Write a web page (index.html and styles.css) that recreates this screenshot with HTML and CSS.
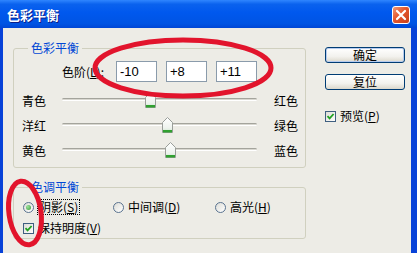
FILE: index.html
```html
<!DOCTYPE html>
<html lang="zh-CN">
<head>
    <meta charset="UTF-8">
    <title>色彩平衡</title>
    <link rel="stylesheet" href="styles.css">
</head>
<body>

<div class="window">
    <div class="titlebar">
        <span class="title">色彩平衡</span>
        <span class="close">
            <svg width="18" height="18" viewBox="0 0 18 18">
                <path d="M5 5 L13 13 M13 5 L5 13" stroke="#fff" stroke-width="2.2" stroke-linecap="round"/>
            </svg>
        </span>
    </div>

    <div class="client">
        <div class="main">
            <fieldset class="group group-color">
                <legend>色彩平衡</legend>
                <div class="levels">
                    <label class="levels-label">色阶(<u>L</u>):</label>
                    <input type="text" class="num" value="-10">
                    <input type="text" class="num" value="+8">
                    <input type="text" class="num" value="+11">
                </div>
                <div class="sliders">
                    <div class="slider-row">
                        <span class="lbl-left">青色</span>
                        <div class="track"><span class="thumb" style="left: 45%"></span></div>
                        <span class="lbl-right">红色</span>
                    </div>
                    <div class="slider-row">
                        <span class="lbl-left">洋红</span>
                        <div class="track"><span class="thumb" style="left: 54%"></span></div>
                        <span class="lbl-right">绿色</span>
                    </div>
                    <div class="slider-row">
                        <span class="lbl-left">黄色</span>
                        <div class="track"><span class="thumb" style="left: 55.5%"></span></div>
                        <span class="lbl-right">蓝色</span>
                    </div>
                </div>
            </fieldset>

            <fieldset class="group group-tone">
                <legend>色调平衡</legend>
                <div class="radios">
                    <span class="opt opt-shadow"><span class="radio checked"></span><span class="focus">阴影(<u>S</u>)</span></span>
                    <span class="opt opt-mid"><span class="radio"></span><span>中间调(<u>D</u>)</span></span>
                    <span class="opt"><span class="radio"></span><span>高光(<u>H</u>)</span></span>
                </div>
                <div class="keep">
                    <span class="opt"><span class="checkbox checked"></span><span>保持明度(<u>V</u>)</span></span>
                </div>
            </fieldset>
        </div>

        <div class="side">
            <button class="btn btn-default">确定</button>
            <button class="btn">复位</button>
            <span class="opt preview"><span class="checkbox checked"></span><span>预览(<u>P</u>)</span></span>
        </div>
    </div>

    <svg class="marks" width="417" height="253" viewBox="0 0 417 253">
        <ellipse cx="183" cy="68" rx="88" ry="28" fill="none" stroke="#e2142c" stroke-width="5"/>
        <ellipse cx="25" cy="213" rx="16" ry="32" transform="rotate(-8 25 213)" fill="none" stroke="#e2142c" stroke-width="5"/>
    </svg>
</div>

</body>
</html>
```

FILE: styles.css
```css
* {
    box-sizing: border-box;
}
body {
    margin: 0;
    font-family: "Noto Sans CJK SC", "Liberation Sans", sans-serif;
    font-size: 12px;
    color: #000;
    background: #fff;
}
.window {
    position: relative;
    width: 417px;
    height: 253px;
    overflow: hidden;
    display: flex;
    flex-direction: column;
    background: #0842d8;
}
.titlebar {
    height: 28px;
    flex: none;
    display: flex;
    align-items: center;
    justify-content: space-between;
    padding: 2px 7px 0 7px;
    background: linear-gradient(#2f86ff 0%, #0a62ee 15%, #0058ee 45%, #0054e3 85%, #0046d5 100%);
}
.title {
    color: #fff;
    font-weight: bold;
    font-size: 13px;
    line-height: 16px;
    text-shadow: 1px 1px 0 #0a1e8a;
}
.close {
    width: 18px;
    height: 18px;
    display: block;
    border: 1px solid #fff;
    border-radius: 3px;
    background: linear-gradient(135deg, #f09a78 0%, #e3552c 45%, #c8401c 100%);
}
.close svg {
    display: block;
    margin: -1px;
}
.client {
    flex: 1;
    display: flex;
    margin: 0 6px 0 3px;
    padding: 13px 0 0 10px;
    background: #edece6;
}
.main {
    width: 293px;
    flex: none;
}
.group {
    margin: 0;
    padding: 0;
    min-width: 0;
    border: 1px solid #d0d0bf;
    border-radius: 3px;
}
.group legend {
    margin-left: 14px;
    padding: 0 3px;
    color: #0046d5;
    line-height: 14px;
}
.group-color {
    padding-bottom: 4px;
}
.levels {
    display: flex;
    align-items: center;
    margin-top: 6px;
    padding-left: 48px;
}
.levels-label {
    width: 54px;
    line-height: 14px;
}
.num {
    width: 41px;
    height: 21px;
    margin: 0 9px 0 0;
    padding: 0 3px;
    border: 1px solid #8a9bab;
    background: #fff;
    font-family: "Liberation Sans", sans-serif;
    font-size: 13px;
    color: #000;
}
.sliders {
    margin-top: 6px;
}
.slider-row {
    display: flex;
    align-items: center;
    height: 25px;
    padding-left: 8px;
}
.lbl-left {
    width: 40px;
    line-height: 14px;
}
.lbl-right {
    margin-left: 17px;
    line-height: 14px;
}
.track {
    position: relative;
    width: 195px;
    height: 3px;
    margin-top: -2px;
    border-top: 1px solid #a4a49c;
    border-bottom: 1px solid #fff;
    border-radius: 2px;
    background: #d8d7d0;
}
.thumb {
    position: absolute;
    top: -7px;
    width: 11px;
    height: 16px;
    margin-left: -5px;
    background: url("data:image/svg+xml,%3Csvg xmlns='http://www.w3.org/2000/svg' width='11' height='16'%3E%3Cdefs%3E%3ClinearGradient id='g' x1='0' y1='0' x2='0' y2='1'%3E%3Cstop offset='0' stop-color='%23ffffff'/%3E%3Cstop offset='0.7' stop-color='%23eef3ee'/%3E%3Cstop offset='1' stop-color='%23c9e6c9'/%3E%3C/linearGradient%3E%3C/defs%3E%3Cpath d='M0.5 5.5 L5.5 0.5 L10.5 5.5 V15.5 H0.5 Z' fill='url(%23g)' stroke='%239a9e9a'/%3E%3Crect x='1' y='13' width='9' height='2.5' fill='%2330a030'/%3E%3C/svg%3E") no-repeat;
}
.group-tone {
    margin-top: 12px;
    padding-bottom: 2px;
}
.radios {
    display: flex;
    align-items: center;
    height: 16px;
    margin-top: 5px;
    padding-left: 9px;
}
.keep {
    display: flex;
    align-items: center;
    height: 16px;
    margin-top: 5px;
    padding-left: 9px;
}
.opt {
    display: flex;
    align-items: center;
    gap: 4px;
    line-height: 14px;
}
.opt-shadow {
    width: 90px;
}
.opt-mid {
    width: 102px;
}
.focus {
    border: 1px dotted #000;
    padding: 0 1px;
    margin-left: -1px;
}
.radio {
    width: 11px;
    height: 11px;
    flex: none;
    border: 1px solid #5a7390;
    border-radius: 50%;
    background: linear-gradient(135deg, #dcdcd6, #fff);
    position: relative;
}
.radio.checked::after {
    content: "";
    position: absolute;
    left: 2px;
    top: 2px;
    width: 5px;
    height: 5px;
    border-radius: 50%;
    background: radial-gradient(circle at 35% 35%, #9be39b, #3a9a3a);
}
.checkbox {
    width: 11px;
    height: 11px;
    flex: none;
    border: 1px solid #3f5f80;
    background: linear-gradient(135deg, #dcdcd6, #fff);
}
.checkbox.checked {
    background: url("data:image/svg+xml,%3Csvg xmlns='http://www.w3.org/2000/svg' width='9' height='9'%3E%3Cpath d='M1.5 4.2 L3.6 6.4 L7.6 2' fill='none' stroke='%2321a121' stroke-width='1.8'/%3E%3C/svg%3E") no-repeat center, linear-gradient(135deg, #dcdcd6, #fff);
}
.side {
    display: flex;
    flex-direction: column;
    align-items: flex-start;
    margin: 6px 0 0 19px;
}
.btn {
    width: 80px;
    height: 16px;
    padding: 0;
    margin-bottom: 11px;
    border: 1px solid #003c74;
    border-radius: 3px;
    background: linear-gradient(#ffffff, #f3f2ee 60%, #dcd8cc);
    font-family: "Noto Sans CJK SC", sans-serif;
    font-size: 12px;
    line-height: 14px;
    color: #000;
}
.btn-default {
    box-shadow: inset 0 0 0 1px #b6cbee;
}
.preview {
    margin-top: 8px;
}
.marks {
    position: absolute;
    left: 0;
    top: 0;
    pointer-events: none;
}
```
